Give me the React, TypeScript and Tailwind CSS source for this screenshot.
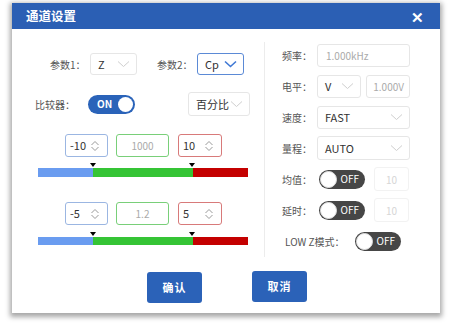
import React from "react";

const FONT = { fontFamily: '"Noto Sans CJK SC", "Noto Sans", sans-serif' };

const Chevron = ({ active }: { active?: boolean }) => (
  <svg width="13" height="8" viewBox="0 0 13 8" className="shrink-0">
    <path
      d="M1 1.5 L6.5 6.5 L12 1.5"
      fill="none"
      stroke={active ? "#3f78d4" : "#cfcfcf"}
      strokeWidth={active ? 1.6 : 1}
    />
  </svg>
);

const Spinner = () => (
  <svg width="10" height="12" viewBox="0 0 10 12" className="shrink-0">
    <path d="M1.5 5 L5 1.5 L8.5 5" fill="none" stroke="#9a9a9a" strokeWidth="1" />
    <path d="M1.5 7 L5 10.5 L8.5 7" fill="none" stroke="#9a9a9a" strokeWidth="1" />
  </svg>
);

const Select = ({ value, w, h = "h-[23px]", active }: { value: string; w: string; h?: string; active?: boolean }) => (
  <div
    className={`${w} ${h} flex items-center justify-between pl-[7px] pr-[6px] rounded-[3px] border text-[11px] text-[#333] ${
      active ? "border-[#5b8ad6]" : "border-[#e6e6e6]"
    }`}
  >
    <span>{value}</span>
    <Chevron active={active} />
  </div>
);

const Label = ({ text, w }: { text: string; w: string }) => (
  <div className={`${w} text-[10px] text-[#555] shrink-0`}>{text}</div>
);

const Toggle = ({ on }: { on?: boolean }) =>
  on ? (
    <div className="w-[47px] h-[19px] rounded-full bg-[#2a63b9] flex items-center justify-between pl-[9px] pr-[2px]">
      <span className="text-[10px] font-bold text-white leading-none">ON</span>
      <div className="w-[15px] h-[15px] rounded-full bg-white" />
    </div>
  ) : (
    <div className="w-[46px] h-[19px] rounded-full bg-[#464646] flex items-center justify-between pl-[1px] pr-[6px]">
      <div className="w-[17px] h-[17px] rounded-full bg-white border border-[#ddd]" />
      <span className="text-[10px] text-white leading-none">OFF</span>
    </div>
  );

const Marker = ({ left }: { left: string }) => (
  <div
    className={`absolute top-[-5px] ${left} w-0 h-0 border-l-[3px] border-r-[3px] border-t-[4px] border-l-transparent border-r-transparent border-t-black`}
  />
);

const LimitRow = ({ lo, mid, hi }: { lo: string; mid: string; hi: string }) => (
  <div className="flex h-[23px] pl-[53px] gap-[8px]">
    <div className="w-[43px] h-full flex items-center justify-between px-[4px] pr-[7px] rounded-[3px] border border-[#9bb6e2] text-[11px] text-[#333]">
      <span>{lo}</span>
      <Spinner />
    </div>
    <div className="w-[53px] h-full flex items-center justify-center rounded-[3px] border border-[#79cf79] text-[10px] text-[#aaa]">
      {mid}
    </div>
    <div className="w-[44px] h-full flex items-center justify-between px-[4px] pr-[7px] rounded-[3px] border border-[#d87a7a] text-[11px] text-[#333] ml-[1px]">
      <span>{hi}</span>
      <Spinner />
    </div>
  </div>
);

const Bar = ({ mt, h }: { mt: string; h: string }) => (
  <div className={`relative ${mt} ml-[26px] w-[210px] ${h} flex`}>
    <div className="w-[55px] h-full bg-[#6a9cf0]" />
    <div className="w-[100px] h-full bg-[#35c435]" />
    <div className="flex-1 h-full bg-[#c40000]" />
    <Marker left="left-[52px]" />
    <Marker left="left-[151px]" />
  </div>
);

export default function App() {
  return (
    <div className="w-[450px] h-[324px] bg-white overflow-hidden" style={FONT}>
      <div className="ml-[12px] mt-[3px] w-[428px] h-[310px] bg-white shadow-[0_2px_5px_2px_rgba(0,0,0,0.35)] flex flex-col">
        <div className="h-[26px] bg-[#2b5fb4] flex items-center justify-between px-[14px] pr-[16px]">
          <span className="text-[12.5px] font-bold text-white">通道设置</span>
          <span className="text-[15px] font-bold text-white leading-none">✕</span>
        </div>

        <div className="flex pt-[13px]">
          <div className="w-[253px] h-[215px] border-r border-[#ececec] pt-[11px] shrink-0">
            <div className="flex items-center h-[22px] pl-[38px]">
              <Label text="参数1：" w="w-[40px]" />
              <Select value="Z" w="w-[47px]" h="h-[22px]" />
              <div className="ml-[20px]">
                <Label text="参数2：" w="w-[40px]" />
              </div>
              <Select value="Cp" w="w-[47px]" h="h-[22px]" active />
            </div>

            <div className="flex items-center h-[24px] mt-[17px] pl-[23px]">
              <Label text="比较器：" w="w-[53px]" />
              <Toggle on />
              <div className="ml-[53px]">
                <Select value="百分比" w="w-[62px]" h="h-[24px]" />
              </div>
            </div>

            <div className="mt-[18px]">
              <LimitRow lo="-10" mid="1000" hi="10" />
            </div>
            <Bar mt="mt-[11px]" h="h-[9px]" />

            <div className="mt-[25px]">
              <LimitRow lo="-5" mid="1.2" hi="5" />
            </div>
            <Bar mt="mt-[12px]" h="h-[8px]" />
          </div>

          <div className="flex flex-col gap-[7px] pl-[17px] pt-[1px]">
            <div className="flex items-center h-[24px]">
              <Label text="频率：" w="w-[35px]" />
              <div className="w-[93px] h-[23px] flex items-center pl-[8px] rounded-[3px] border border-[#e6e6e6] text-[10px] text-[#aaa]">
                1.000kHz
              </div>
            </div>
            <div className="flex items-center h-[24px]">
              <Label text="电平：" w="w-[35px]" />
              <Select value="V" w="w-[44px]" />
              <div className="ml-[5px] w-[44px] h-[23px] flex items-center justify-end pr-[5px] rounded-[3px] border border-[#e6e6e6] text-[10px] text-[#aaa]">
                1.000V
              </div>
            </div>
            <div className="flex items-center h-[24px]">
              <Label text="速度：" w="w-[35px]" />
              <Select value="FAST" w="w-[93px]" />
            </div>
            <div className="flex items-center h-[24px]">
              <Label text="量程：" w="w-[35px]" />
              <Select value="AUTO" w="w-[93px]" h="h-[24px]" />
            </div>
            <div className="flex items-center h-[24px]">
              <Label text="均值：" w="w-[37px]" />
              <Toggle />
              <div className="ml-[9px] w-[35px] h-[24px] flex items-center justify-center rounded-[3px] border border-[#f2f2f2] text-[10px] text-[#d6d6d6]">
                10
              </div>
            </div>
            <div className="flex items-center h-[24px]">
              <Label text="延时：" w="w-[37px]" />
              <Toggle />
              <div className="ml-[9px] w-[35px] h-[24px] flex items-center justify-center rounded-[3px] border border-[#f2f2f2] text-[10px] text-[#d6d6d6]">
                10
              </div>
            </div>
            <div className="flex items-center h-[24px] pl-[3px]">
              <Label text="LOW Z模式：" w="w-[70px]" />
              <Toggle />
            </div>
          </div>
        </div>

        <div className="flex pl-[135px] mt-[15px] gap-[50px]">
          <div className="w-[55px] h-[31px] rounded-[3px] bg-[#2b62b8] flex items-center justify-center text-[11px] font-bold text-white tracking-[1px]">
            确认
          </div>
          <div className="w-[55px] h-[31px] -mt-[1px] rounded-[3px] bg-[#2b62b8] flex items-center justify-center text-[11px] font-bold text-white tracking-[1px]">
            取消
          </div>
        </div>
      </div>
    </div>
  );
}
